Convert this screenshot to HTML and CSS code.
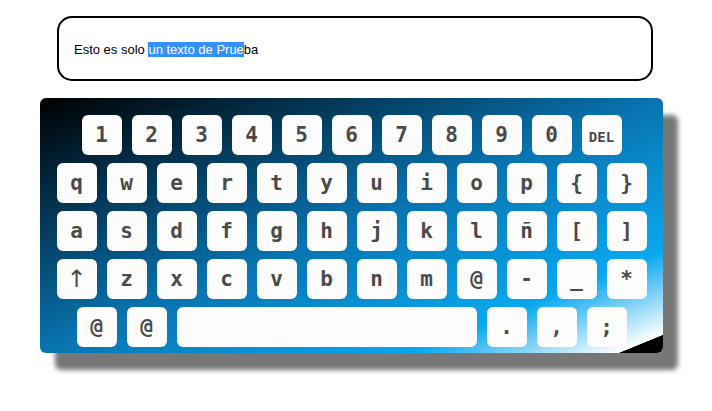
FILE: index.html
```html
<!DOCTYPE html>
<html lang="es">
<head>
<meta charset="utf-8">
<title>Teclado</title>
<link rel="stylesheet" href="styles.css">
</head>
<body>
<div class="page">
  <div class="textbox"><span>Esto es solo <span class="sel">un texto de Prue</span>ba</span></div>
  <div class="keyboard">
    <div class="row">
      <div class="key">1</div><div class="key">2</div><div class="key">3</div><div class="key">4</div><div class="key">5</div><div class="key">6</div><div class="key">7</div><div class="key">8</div><div class="key">9</div><div class="key">0</div><div class="key small">DEL</div>
    </div>
    <div class="row">
      <div class="key">q</div><div class="key">w</div><div class="key">e</div><div class="key">r</div><div class="key">t</div><div class="key">y</div><div class="key">u</div><div class="key">i</div><div class="key">o</div><div class="key">p</div><div class="key">{</div><div class="key">}</div>
    </div>
    <div class="row">
      <div class="key">a</div><div class="key">s</div><div class="key">d</div><div class="key">f</div><div class="key">g</div><div class="key">h</div><div class="key">j</div><div class="key">k</div><div class="key">l</div><div class="key">ñ</div><div class="key">[</div><div class="key">]</div>
    </div>
    <div class="row">
      <div class="key light">↑</div><div class="key">z</div><div class="key">x</div><div class="key">c</div><div class="key">v</div><div class="key">b</div><div class="key">n</div><div class="key">m</div><div class="key">@</div><div class="key">-</div><div class="key">_</div><div class="key">*</div>
    </div>
    <div class="row">
      <div class="key">@</div><div class="key">@</div><div class="key space"></div><div class="key">.</div><div class="key">,</div><div class="key">;</div>
    </div>
  </div>
</div>
</body>
</html>
```
FILE: styles.css
```css
html, body {
  margin: 0;
  padding: 0;
  background: #ffffff;
}
.page {
  padding-top: 16px;
  width: 712px;
  min-height: 411px;
  box-sizing: border-box;
}
.textbox {
  margin-left: 57px;
  width: 596px;
  height: 65px;
  box-sizing: border-box;
  border: 2px solid #000;
  border-radius: 15px;
  padding-left: 15px;
  padding-top: 1px;
  display: flex;
  align-items: center;
  font-family: "Liberation Sans", Arial, sans-serif;
  font-size: 13px;
  color: #000;
}
.sel {
  background: #3390ff;
  color: #fff;
}
.keyboard {
  margin-top: 17px;
  margin-left: 40px;
  width: 623px;
  height: 255px;
  box-sizing: border-box;
  padding-top: 17px;
  border-radius: 6px;
  background: linear-gradient(to bottom right, #000000 0%, #03324f 22%, #0874b0 50%, #0aa8ef 80%, #ffffff 96.4%, #000000 96.5%);
  box-shadow: 15px 17px 5px #777777;
  display: flex;
  flex-direction: column;
  gap: 8px;
}
.row {
  display: flex;
  justify-content: center;
  gap: 10px;
}
.key {
  width: 40px;
  height: 40px;
  border-radius: 6px;
  background: #fcfcfc;
  color: #4a4a4a;
  font-family: "DejaVu Sans Mono", monospace;
  font-weight: bold;
  font-size: 21px;
  display: flex;
  align-items: center;
  justify-content: center;
}
.key.small {
  font-size: 14px;
  padding-top: 4px;
  box-sizing: border-box;
}
.key.light {
  font-weight: normal;
  font-family: "DejaVu Sans", sans-serif;
  font-size: 24px;
}
.key.space {
  width: 300px;
}
```
